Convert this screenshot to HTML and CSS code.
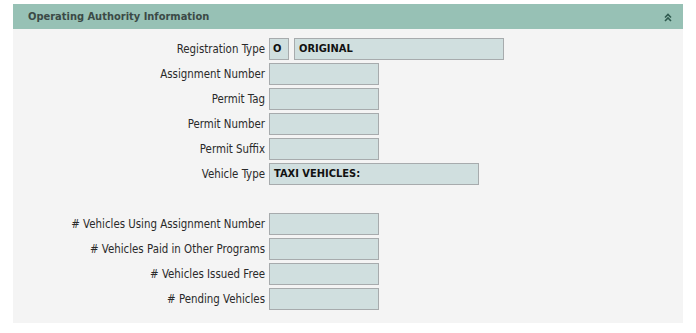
FILE: index.html
```html
<!DOCTYPE html>
<html lang="en">
<head>
    <meta charset="UTF-8">
    <title>Operating Authority Information</title>
    <link rel="stylesheet" href="styles.css">
</head>
<body>

    <section class="panel">
        <header class="panel-head">
            <h2>Operating Authority Information</h2>
            <span class="collapse">
                <svg width="8" height="9" viewBox="0 0 8 9">
                    <path d="M1 4.5 L4 1.5 L7 4.5 M1 8 L4 5 L7 8" fill="none" stroke="#2f5a4f" stroke-width="1.6"/>
                </svg>
            </span>
        </header>

        <div class="panel-body">
            <div class="row">
                <label>Registration Type</label>
                <div class="field code">O</div>
                <div class="field wide">ORIGINAL</div>
            </div>
            <div class="row">
                <label>Assignment Number</label>
                <div class="field"></div>
            </div>
            <div class="row">
                <label>Permit Tag</label>
                <div class="field"></div>
            </div>
            <div class="row">
                <label>Permit Number</label>
                <div class="field"></div>
            </div>
            <div class="row">
                <label>Permit Suffix</label>
                <div class="field"></div>
            </div>
            <div class="row">
                <label>Vehicle Type</label>
                <div class="field wide">TAXI VEHICLES:</div>
            </div>

            <div class="spacer"></div>

            <div class="row">
                <label># Vehicles Using Assignment Number</label>
                <div class="field"></div>
            </div>
            <div class="row">
                <label># Vehicles Paid in Other Programs</label>
                <div class="field"></div>
            </div>
            <div class="row">
                <label># Vehicles Issued Free</label>
                <div class="field"></div>
            </div>
            <div class="row">
                <label># Pending Vehicles</label>
                <div class="field"></div>
            </div>
        </div>
    </section>

</body>
</html>
```

FILE: styles.css
```css
/* General */
body {
    margin: 0;
    padding: 4px 13px 0;
    background: #ffffff;
    font-family: 'DejaVu Sans Condensed', 'Liberation Sans', sans-serif;
    font-size: 11px;
    color: #222;
}

/* Panel */
.panel {
    width: 670px;
    background: #f4f4f4;
}

.panel-head {
    display: flex;
    align-items: center;
    justify-content: space-between;
    height: 25px;
    padding: 0 11px 0 15px;
    background: #97c1b5;
}

.panel-head h2 {
    margin: 0;
    font-size: 11px;
    font-weight: bold;
    color: #3b4a46;
}

.collapse {
    display: flex;
    margin-top: 1px;
}

.panel-body {
    display: flex;
    flex-direction: column;
    gap: 3px;
    padding: 9px 0 13px;
}

/* Rows */
.row {
    display: flex;
    align-items: center;
    gap: 4px;
    height: 22px;
}

.row label {
    width: 252px;
    text-align: right;
    font-size: 11.4px;
    color: #2a2a2a;
}

.spacer {
    height: 22px;
}

.field {
    box-sizing: border-box;
    width: 110px;
    height: 22px;
    padding: 0 4px;
    line-height: 20px;
    background: #d0dfdf;
    border: 1px solid #a7abad;
    font-weight: bold;
    color: #111;
}

.field.code {
    width: 20px;
    padding: 0 3px;
}

.field.wide {
    width: 210px;
}

.row .code + .wide {
    margin-left: 1px;
}
```
